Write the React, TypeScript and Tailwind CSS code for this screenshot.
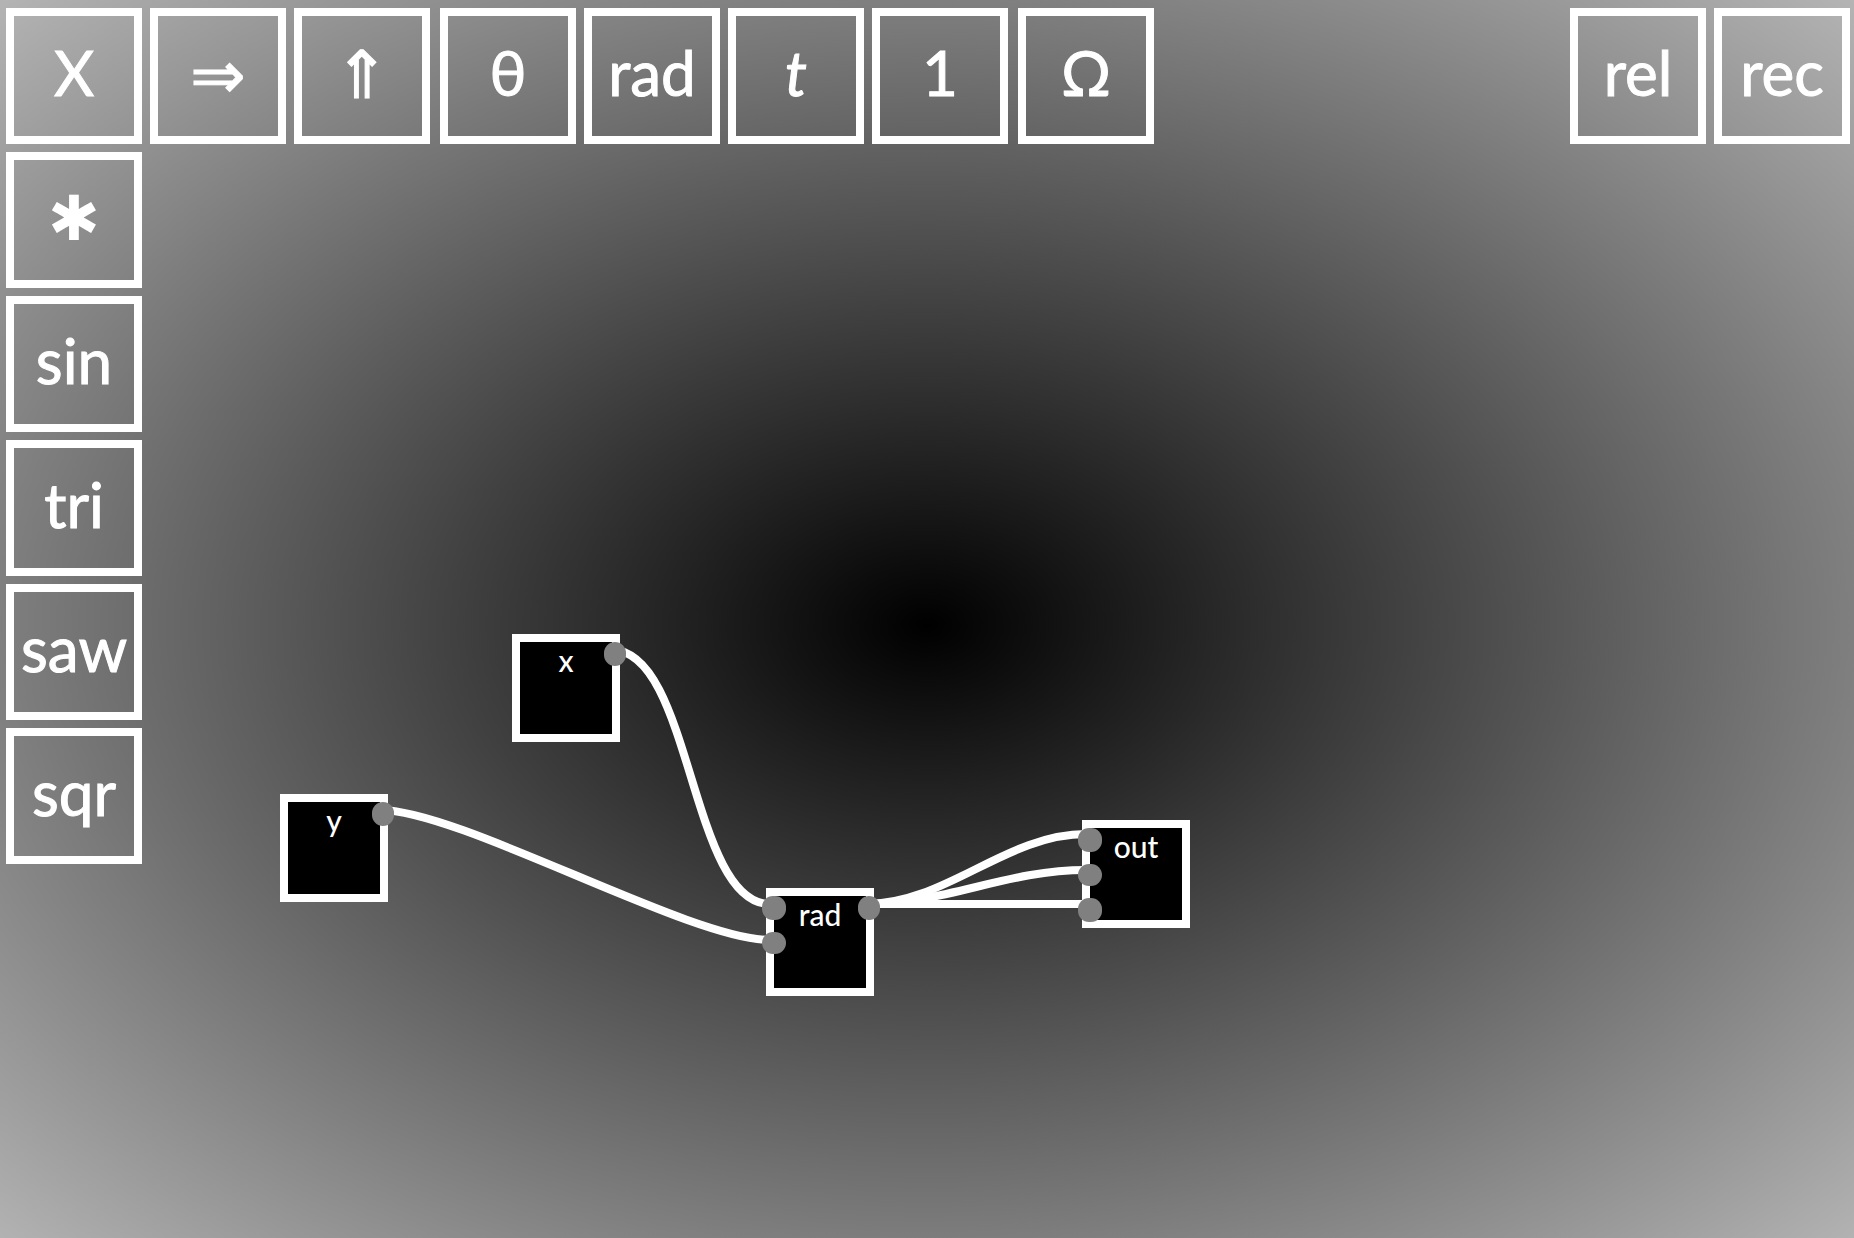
import React from "react";

type Tool = { label: string; name: string; italic?: boolean; face?: "arrow" | "symbol" };

const topGroups: Tool[][] = [
  [
    { label: "X", name: "X" },
    { label: "⇒", name: "horizontal", face: "arrow" },
    { label: "⇑", name: "vertical", face: "arrow" },
  ],
  [
    { label: "θ", name: "theta" },
    { label: "rad", name: "rad" },
    { label: "t", name: "time", italic: true },
    { label: "1", name: "one" },
  ],
  [{ label: "Ω", name: "omega" }],
];

const sideTools: Tool[] = [
  { label: "✱", name: "multiply", face: "symbol" },
  { label: "sin", name: "sin" },
  { label: "tri", name: "tri" },
  { label: "saw", name: "saw" },
  { label: "sqr", name: "sqr" },
];

const actions: Tool[] = [
  { label: "rel", name: "rel" },
  { label: "rec", name: "rec" },
];

const nodes = [
  { label: "x", x: 512, y: 634, inputs: 0, outputs: 1 },
  { label: "y", x: 280, y: 794, inputs: 0, outputs: 1 },
  { label: "rad", x: 766, y: 888, inputs: 2, outputs: 1 },
  { label: "out", x: 1082, y: 820, inputs: 3, outputs: 0 },
];

const wires = [
  [612, 650, 770, 904],
  [380, 810, 770, 940],
  [866, 904, 1086, 834],
  [866, 904, 1086, 870],
  [866, 904, 1086, 904],
];

const PULL = 80;

function wirePath([x1, y1, x2, y2]: number[]) {
  return `M${x1} ${y1}C${x1 + PULL} ${y1} ${x2 - PULL} ${y2} ${x2} ${y2}`;
}

const faces = {
  text: 'pb-2 text-[62px] [-webkit-text-stroke:1px_white]',
  arrow: 'font-["DejaVu_Sans"] text-[66px] [-webkit-text-stroke:1px_white]',
  symbol: 'pb-0.5 font-["DejaVu_Sans"] text-[62px]',
};

function ToolButton({ tool }: { tool: Tool }) {
  return (
    <button
      type="button"
      aria-label={tool.name}
      className={`flex size-[136px] shrink-0 items-center justify-center border-8 border-white leading-[80px] text-white ${faces[tool.face ?? "text"]} ${tool.italic ? "italic" : ""}`}
    >
      {tool.label}
    </button>
  );
}

function Ports({ count, side }: { count: number; side: string }) {
  return (
    <div className={`absolute top-0 flex flex-col gap-3 ${side}`}>
      {Array.from({ length: count }, (_, i) => (
        <span key={i} className="h-6 w-full rounded-[11px] bg-[#808080] even:h-[22px]" />
      ))}
    </div>
  );
}

export default function App() {
  return (
    <main className='relative min-h-screen overflow-hidden bg-[radial-gradient(ellipse_farthest-corner_at_50%_50.5%,#000_0%,#b4b4b4_100%)] font-["Lato",sans-serif] text-white'>
      <svg className="pointer-events-none absolute inset-0 h-full w-full" fill="none" stroke="#fff" strokeWidth="8">
        {wires.map((w) => (
          <path key={w.join()} d={wirePath(w)} />
        ))}
      </svg>

      {nodes.map((n) => (
        <section
          key={n.label}
          className="absolute size-[108px] border-8 border-white bg-black pt-0.5 text-center text-[30px] leading-8 font-medium"
          style={{ left: n.x, top: n.y }}
        >
          {n.label}
          <Ports count={n.inputs} side="-left-3 w-6" />
          <Ports count={n.outputs} side="-right-3.5 w-[22px]" />
        </section>
      ))}

      <header className="relative flex justify-between pt-2 pr-1 pl-1.5">
        <nav className="flex gap-2.5">
          {topGroups.map((group, i) => (
            <div key={i} className="flex gap-2">
              {group.map((t) => (
                <ToolButton key={t.label} tool={t} />
              ))}
            </div>
          ))}
        </nav>
        <div className="flex gap-2">
          {actions.map((t) => (
            <ToolButton key={t.label} tool={t} />
          ))}
        </div>
      </header>

      <aside className="relative flex w-fit flex-col gap-2 pt-2 pl-1.5">
        {sideTools.map((t) => (
          <ToolButton key={t.label} tool={t} />
        ))}
      </aside>
    </main>
  );
}
